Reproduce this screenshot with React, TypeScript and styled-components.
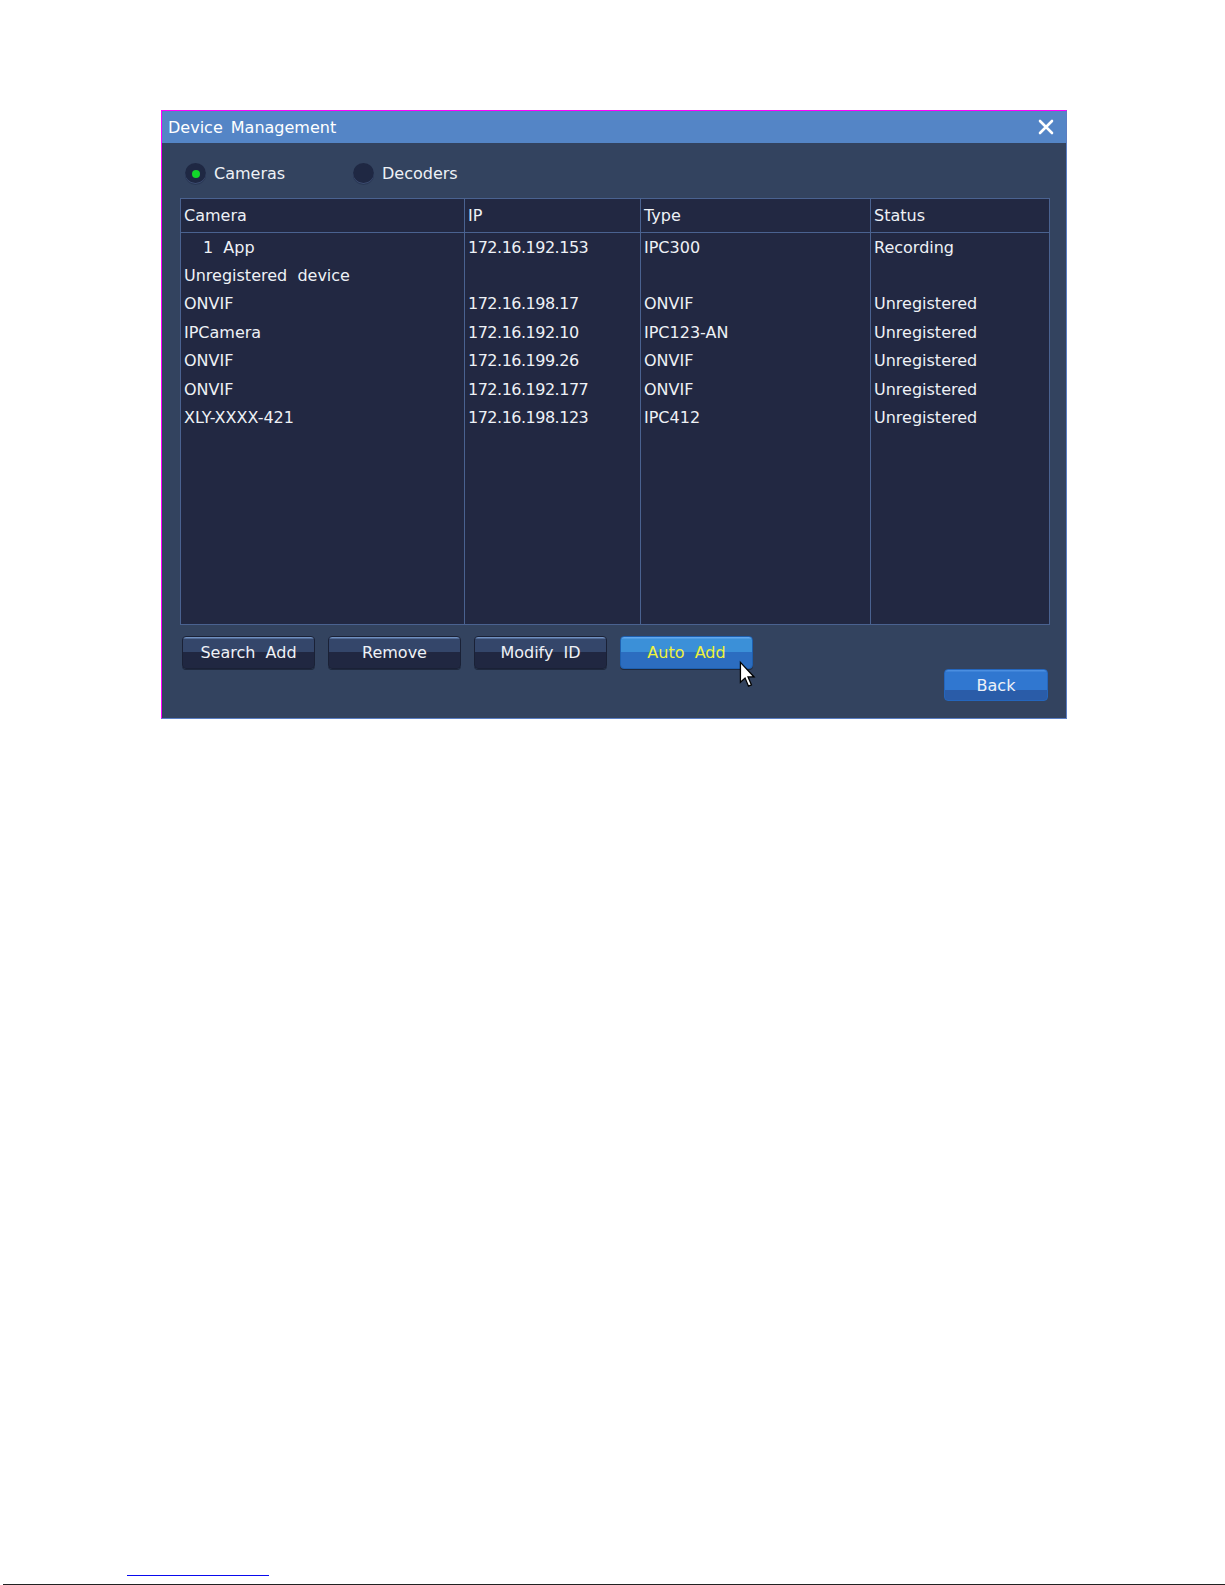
import styled, { createGlobalStyle } from 'styled-components';

const GlobalStyle = createGlobalStyle`
  html, body {
    margin: 0;
    padding: 0;
    background: #ffffff;
  }
  * {
    box-sizing: border-box;
  }
`;

type Row = { camera: string; ip: string; type: string; status: string; indent?: boolean };

const rows: Row[] = [
  { camera: '1  App', ip: '172.16.192.153', type: 'IPC300', status: 'Recording', indent: true },
  { camera: 'Unregistered  device', ip: '', type: '', status: '' },
  { camera: 'ONVIF', ip: '172.16.198.17', type: 'ONVIF', status: 'Unregistered' },
  { camera: 'IPCamera', ip: '172.16.192.10', type: 'IPC123-AN', status: 'Unregistered' },
  { camera: 'ONVIF', ip: '172.16.199.26', type: 'ONVIF', status: 'Unregistered' },
  { camera: 'ONVIF', ip: '172.16.192.177', type: 'ONVIF', status: 'Unregistered' },
  { camera: 'XLY-XXXX-421', ip: '172.16.198.123', type: 'IPC412', status: 'Unregistered' },
];

const columns: { key: keyof Row; title: string; numeric?: boolean }[] = [
  { key: 'camera', title: 'Camera' },
  { key: 'ip', title: 'IP', numeric: true },
  { key: 'type', title: 'Type' },
  { key: 'status', title: 'Status' },
];

export default function App() {
  return (
    <>
      <GlobalStyle />
      <Page>
        <Dialog>
          <TitleBar>
            <Title>Device Management</Title>
            <CloseIcon width="16" height="16" viewBox="0 0 16 16">
              <path d="M2 2 L14 14 M14 2 L2 14" stroke="#ffffff" strokeWidth="2.6" strokeLinecap="round" />
            </CloseIcon>
          </TitleBar>
          <Body>
            <RadioRow>
              <Option>
                <Radio $checked />
                <span>Cameras</span>
              </Option>
              <Option>
                <Radio />
                <span>Decoders</span>
              </Option>
            </RadioRow>
            <Table>
              {columns.map((col, i) => (
                <Column key={col.key} $last={i === columns.length - 1}>
                  <HeaderCell>{col.title}</HeaderCell>
                  {rows.map((r, j) => (
                    <Cell key={j} $numeric={col.numeric} $indent={col.key === 'camera' && r.indent}>
                      {r[col.key]}
                    </Cell>
                  ))}
                </Column>
              ))}
            </Table>
            <Footer>
              <ButtonGroup>
                <Button>Search  Add</Button>
                <Button>Remove</Button>
                <Button>Modify  ID</Button>
                <Button $active>
                  Auto  Add
                  <Cursor width="17" height="27" viewBox="0 0 13 21">
                    <path
                      d="M1 1 L1 16.5 L4.6 13.2 L7.3 19.6 L9.6 18.6 L6.9 12.4 L11.6 12.4 Z"
                      fill="#ffffff"
                      stroke="#000000"
                      strokeWidth="1"
                      strokeLinejoin="miter"
                    />
                  </Cursor>
                </Button>
              </ButtonGroup>
              <BackButton>Back</BackButton>
            </Footer>
          </Body>
        </Dialog>
        <PageFoot>
          <FootLink />
          <FootRule />
        </PageFoot>
      </Page>
    </>
  );
}

const Page = styled.div`
  height: 1585px;
  display: flex;
  flex-direction: column;
  padding: 110px 0 0 161px;
  font-family: 'DejaVu Sans', 'Liberation Sans', sans-serif;
  font-size: 16px;
  color: #eef1f6;
`;

const Dialog = styled.div`
  width: 906px;
  height: 609px;
  display: flex;
  flex-direction: column;
  background: #33435f;
  border-top: 1px solid #ff00ff;
  border-left: 1px solid #ff00ff;
  border-right: 1px solid #5a7ec4;
  border-bottom: 1px solid #5a7ec4;
`;

const TitleBar = styled.div`
  height: 32px;
  flex: none;
  display: flex;
  align-items: center;
  justify-content: space-between;
  padding: 0 12px 0 6px;
  background: #5485c6;
`;

const Title = styled.div`
  color: #ffffff;
  font-size: 16px;
  word-spacing: 3px;
  white-space: pre;
`;

const CloseIcon = styled.svg`
  display: block;
`;

const Body = styled.div`
  flex: 1;
  display: flex;
  flex-direction: column;
  padding: 20px 16px 17px 18px;
`;

const RadioRow = styled.div`
  display: flex;
  align-items: center;
  height: 21px;
  padding-left: 5px;
  margin-bottom: 14px;
`;

const Option = styled.label`
  width: 168px;
  display: flex;
  align-items: center;
  gap: 8px;
  font-size: 16px;
  color: #eef1f6;
`;

const Radio = styled.span<{ $checked?: boolean }>`
  position: relative;
  width: 21px;
  height: 21px;
  border-radius: 50%;
  background: #1f2843;
  box-shadow: inset 0 -1px 0 #3d4e72, 0 1px 0 #2a3854;

  &::after {
    content: '';
    position: absolute;
    left: 6.5px;
    top: 6.5px;
    width: 8px;
    height: 8px;
    border-radius: 50%;
    background: #12d62a;
    display: ${(p) => (p.$checked ? 'block' : 'none')};
  }
`;

const Table = styled.div`
  height: 427px;
  display: grid;
  grid-template-columns: 284px 176px 230px 1fr;
  background: #222842;
  border: 1px solid #4a6290;
`;

const Column = styled.div<{ $last?: boolean }>`
  display: flex;
  flex-direction: column;
  border-right: ${(p) => (p.$last ? 'none' : '1px solid #4a6290')};
`;

const HeaderCell = styled.div`
  height: 34px;
  flex: none;
  display: flex;
  align-items: center;
  padding-left: 3px;
  border-bottom: 1px solid #4a6290;
  white-space: pre;
`;

const Cell = styled.div<{ $numeric?: boolean; $indent?: boolean }>`
  height: 28.4px;
  flex: none;
  display: flex;
  align-items: center;
  padding-left: ${(p) => (p.$indent ? '22px' : '3px')};
  letter-spacing: ${(p) => (p.$numeric ? '-0.5px' : 'normal')};
  white-space: pre;
`;

const Footer = styled.div`
  flex: 1;
  display: flex;
  align-items: flex-start;
  justify-content: space-between;
  padding: 11px 2px 0 2px;
`;

const ButtonGroup = styled.div`
  display: flex;
  gap: 13px;
`;

const Button = styled.button<{ $active?: boolean }>`
  position: relative;
  width: 133px;
  height: 33px;
  padding: 0;
  border-radius: 4px;
  border: 1px solid ${(p) => (p.$active ? '#1e5fae' : '#1a2136')};
  font-family: 'DejaVu Sans', 'Liberation Sans', sans-serif;
  font-size: 16px;
  white-space: pre;
  color: ${(p) => (p.$active ? '#eef23c' : '#eef1f6')};
  background: ${(p) =>
    p.$active
      ? 'linear-gradient(to bottom, #62a8ee 0, #62a8ee 1px, #3b90d8 2px, #3b90d8 47%, #2c6dc0 47%, #2c6dc0 100%)'
      : 'linear-gradient(to bottom, #7090c0 0, #7090c0 1px, #34466a 2px, #34466a 47%, #202741 47%, #202741 100%)'};
  box-shadow: 0 1px 0 rgba(10, 14, 28, 0.5);
  cursor: default;
`;

const Cursor = styled.svg`
  position: absolute;
  left: 118px;
  top: 24px;
  pointer-events: none;
  overflow: visible;
`;

const BackButton = styled.button`
  width: 104px;
  height: 32px;
  margin-top: 33px;
  padding: 0;
  border-radius: 4px;
  border: 1px solid #2466bd;
  font-family: 'DejaVu Sans', 'Liberation Sans', sans-serif;
  font-size: 16px;
  color: #eef1f6;
  background: linear-gradient(to bottom, #4a8ee0 0, #4a8ee0 1px, #3077d0 2px, #3077d0 66%, #2a5ca8 66%, #2a5ca8 100%);
  cursor: default;
`;

const PageFoot = styled.div`
  margin-top: auto;
  margin-left: -161px;
  display: flex;
  flex-direction: column;
`;

const FootLink = styled.div`
  width: 142px;
  height: 1px;
  margin-left: 127px;
  margin-bottom: 8px;
  background: #0a0aee;
`;

const FootRule = styled.div`
  height: 1px;
  margin-left: 3px;
  background: #222222;
`;
